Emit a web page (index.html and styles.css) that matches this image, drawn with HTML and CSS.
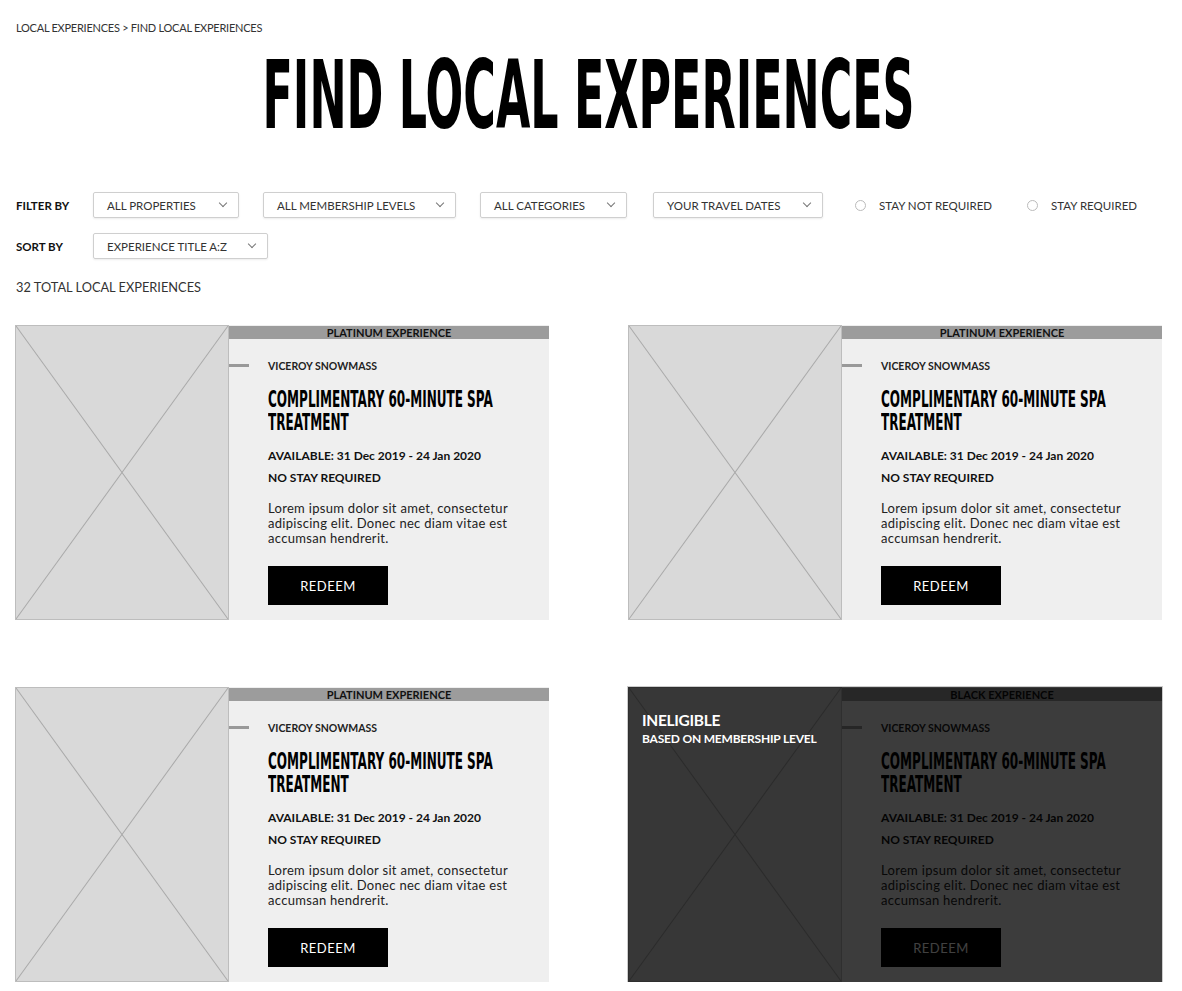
FILE: index.html
```html
<!DOCTYPE html>
<html lang="en">
<head>
    <meta charset="UTF-8">
    <meta name="viewport" content="width=device-width, initial-scale=1.0">
    <title>Find Local Experiences</title>
    <link rel="stylesheet" href="styles.css">
</head>
<body>

<div class="breadcrumb">LOCAL EXPERIENCES &gt; FIND LOCAL EXPERIENCES</div>

<h1 class="page-title"><span>FIND LOCAL EXPERIENCES</span></h1>

<!-- Filters -->
<div class="filter-row">
    <span class="row-label">FILTER BY</span>
    <div class="select w-properties">ALL PROPERTIES <i class="chev"></i></div>
    <div class="select w-levels">ALL MEMBERSHIP LEVELS <i class="chev"></i></div>
    <div class="select w-categories">ALL CATEGORIES <i class="chev"></i></div>
    <div class="select w-dates">YOUR TRAVEL DATES <i class="chev"></i></div>
    <label class="radio"><span class="dot"></span>STAY NOT REQUIRED</label>
    <label class="radio"><span class="dot"></span>STAY REQUIRED</label>
</div>
<div class="filter-row sort-row">
    <span class="row-label">SORT BY</span>
    <div class="select w-sort">EXPERIENCE TITLE A:Z <i class="chev"></i></div>
</div>

<div class="total">32 TOTAL LOCAL EXPERIENCES</div>

<!-- Cards -->
<div class="cards">
    <div class="card">
        <div class="card-img">
            <svg viewBox="0 0 100 100" preserveAspectRatio="none"><line x1="0" y1="0" x2="100" y2="100"/><line x1="100" y1="0" x2="0" y2="100"/></svg>
        </div>
        <div class="card-body">
            <div class="tier">PLATINUM EXPERIENCE</div>
            <div class="card-content">
                <div class="property">VICEROY SNOWMASS</div>
                <h3 class="card-title"><span>COMPLIMENTARY 60-MINUTE SPA<br>TREATMENT</span></h3>
                <p class="meta">AVAILABLE: 31 Dec 2019 - 24 Jan 2020</p>
                <p class="meta">NO STAY REQUIRED</p>
                <p class="desc">Lorem ipsum dolor sit amet, consectetur adipiscing elit. Donec nec diam vitae est accumsan hendrerit.</p>
                <button class="redeem">REDEEM</button>
            </div>
        </div>
    </div>

    <div class="card">
        <div class="card-img">
            <svg viewBox="0 0 100 100" preserveAspectRatio="none"><line x1="0" y1="0" x2="100" y2="100"/><line x1="100" y1="0" x2="0" y2="100"/></svg>
        </div>
        <div class="card-body">
            <div class="tier">PLATINUM EXPERIENCE</div>
            <div class="card-content">
                <div class="property">VICEROY SNOWMASS</div>
                <h3 class="card-title"><span>COMPLIMENTARY 60-MINUTE SPA<br>TREATMENT</span></h3>
                <p class="meta">AVAILABLE: 31 Dec 2019 - 24 Jan 2020</p>
                <p class="meta">NO STAY REQUIRED</p>
                <p class="desc">Lorem ipsum dolor sit amet, consectetur adipiscing elit. Donec nec diam vitae est accumsan hendrerit.</p>
                <button class="redeem">REDEEM</button>
            </div>
        </div>
    </div>

    <div class="card">
        <div class="card-img">
            <svg viewBox="0 0 100 100" preserveAspectRatio="none"><line x1="0" y1="0" x2="100" y2="100"/><line x1="100" y1="0" x2="0" y2="100"/></svg>
        </div>
        <div class="card-body">
            <div class="tier">PLATINUM EXPERIENCE</div>
            <div class="card-content">
                <div class="property">VICEROY SNOWMASS</div>
                <h3 class="card-title"><span>COMPLIMENTARY 60-MINUTE SPA<br>TREATMENT</span></h3>
                <p class="meta">AVAILABLE: 31 Dec 2019 - 24 Jan 2020</p>
                <p class="meta">NO STAY REQUIRED</p>
                <p class="desc">Lorem ipsum dolor sit amet, consectetur adipiscing elit. Donec nec diam vitae est accumsan hendrerit.</p>
                <button class="redeem">REDEEM</button>
            </div>
        </div>
    </div>

    <!-- not eligible -->
    <div class="card ineligible">
        <div class="card-img">
            <svg viewBox="0 0 100 100" preserveAspectRatio="none"><line x1="0" y1="0" x2="100" y2="100"/><line x1="100" y1="0" x2="0" y2="100"/></svg>
        </div>
        <div class="card-body">
            <div class="tier">BLACK EXPERIENCE</div>
            <div class="card-content">
                <div class="property">VICEROY SNOWMASS</div>
                <h3 class="card-title"><span>COMPLIMENTARY 60-MINUTE SPA<br>TREATMENT</span></h3>
                <p class="meta">AVAILABLE: 31 Dec 2019 - 24 Jan 2020</p>
                <p class="meta">NO STAY REQUIRED</p>
                <p class="desc">Lorem ipsum dolor sit amet, consectetur adipiscing elit. Donec nec diam vitae est accumsan hendrerit.</p>
                <button class="redeem">REDEEM</button>
            </div>
        </div>
        <div class="overlay">
            <div class="overlay-title">INELIGIBLE</div>
            <div class="overlay-sub">BASED ON MEMBERSHIP LEVEL</div>
        </div>
    </div>
</div>

</body>
</html>
```

FILE: styles.css
```css
body {
    font-family: Lato, "Open Sans", sans-serif;
    margin: 0;
    padding: 21px 20px 0 15px;
    background-color: #fff;
    color: #222;
}
.breadcrumb {
    font-size: 11px;
    color: #333;
    padding-left: 1px;
    letter-spacing: -0.25px;
}
.page-title {
    margin: 13px 0 0;
    text-align: center;
    height: 106px;
    font-family: "DejaVu Sans", "Liberation Sans", sans-serif;
    font-weight: bold;
    font-size: 60px;
    line-height: 60px;
    color: #000;
}
.page-title span {
    display: inline-block;
    transform: scale(0.74, 1.583);
    transform-origin: top center;
    white-space: nowrap;
}

/* filters */
.filter-row {
    display: flex;
    align-items: center;
    margin-top: 39px;
    height: 26px;
    font-size: 11.5px;
    color: #333;
}
.sort-row {
    margin-top: 15px;
}
.row-label {
    flex: none;
    width: 78px;
    padding-left: 1px;
    box-sizing: border-box;
    font-weight: bold;
    color: #111;
}
.select {
    display: flex;
    align-items: center;
    justify-content: space-between;
    flex: none;
    box-sizing: border-box;
    height: 26px;
    padding: 0 12px 0 13px;
    margin-right: 24px;
    border: 1px solid #cfcfcf;
    border-radius: 2px;
    box-shadow: 0 1px 2px rgba(0, 0, 0, 0.08);
}
.chev {
    width: 5px;
    height: 5px;
    border-right: 1px solid #777;
    border-bottom: 1px solid #777;
    transform: rotate(45deg);
    margin-top: -4px;
}
.w-properties { width: 146px; }
.w-levels { width: 193px; }
.w-categories { width: 147px; margin-right: 26px; }
.w-dates { width: 170px; margin-right: 32px; }
.w-sort { width: 175px; }
.radio {
    display: flex;
    align-items: center;
    margin-right: 35px;
    white-space: nowrap;
}
.radio:last-child {
    margin-right: 0;
}
.dot {
    flex: none;
    width: 9px;
    height: 9px;
    border: 1px solid #bbb;
    border-radius: 50%;
    margin-right: 13px;
}
.total {
    margin-top: 20px;
    font-size: 12.8px;
    color: #333;
    padding-left: 1px;
}

/* cards */
.cards {
    display: grid;
    grid-template-columns: 534px 534px;
    column-gap: 79px;
    row-gap: 67px;
    margin-top: 30px;
}
.card {
    position: relative;
    display: flex;
    height: 295px;
}
.card-img {
    flex: none;
    width: 214px;
    box-sizing: border-box;
    border: 1px solid #bdbdbd;
    background-color: #d9d9d9;
}
.card-img svg {
    display: block;
    width: 100%;
    height: 100%;
}
.card-img line {
    stroke: #a9a9a9;
    stroke-width: 1;
    vector-effect: non-scaling-stroke;
}
.card-body {
    flex: 1;
    background-color: #efefef;
}
.tier {
    height: 13px;
    margin-top: 1px;
    background-color: #9c9c9c;
    text-align: center;
    font-size: 11px;
    line-height: 13px;
    font-weight: bold;
    color: #111;
}
.card-content {
    padding: 20px 0 0 39px;
}
.property {
    display: flex;
    align-items: center;
    font-size: 10.5px;
    font-weight: bold;
    color: #222;
    height: 13px;
}
.property::before {
    content: "";
    width: 20px;
    height: 3px;
    background-color: #999;
    margin-left: -39px;
    margin-right: 19px;
}
.card-title {
    margin: 15px 0 0;
    padding-bottom: 18px;
    font-family: "DejaVu Sans", "Liberation Sans", sans-serif;
    font-size: 14px;
    line-height: 14px;
    color: #000;
}
.card-title span {
    display: block;
    width: max-content;
    transform: scale(0.86, 1.643);
    transform-origin: top left;
    white-space: nowrap;
}
.meta {
    margin: 16px 0 0;
    font-size: 12px;
    font-weight: bold;
    color: #111;
    line-height: 14px;
}
.meta + .meta {
    margin-top: 8px;
}
.desc {
    margin: 16px 0 0;
    width: 270px;
    font-size: 13px;
    letter-spacing: 0.3px;
    line-height: 15px;
    color: #222;
}
.redeem {
    margin-top: 20px;
    width: 120px;
    height: 39px;
    border: none;
    background-color: #000;
    color: #fff;
    font-family: Lato, sans-serif;
    font-size: 13px;
    letter-spacing: 0.5px;
    cursor: pointer;
}

/* ineligible */
.ineligible {
    outline: 1px solid #ccc;
}
.overlay {
    position: absolute;
    inset: 0;
    background-color: rgba(0, 0, 0, 0.75);
    padding: 24px 0 0 14px;
    color: #fff;
}
.overlay-title {
    font-size: 15.5px;
    font-weight: bold;
    letter-spacing: -0.3px;
}
.overlay-sub {
    margin-top: 2px;
    font-size: 12px;
    font-weight: bold;
    letter-spacing: -0.2px;
}
```
